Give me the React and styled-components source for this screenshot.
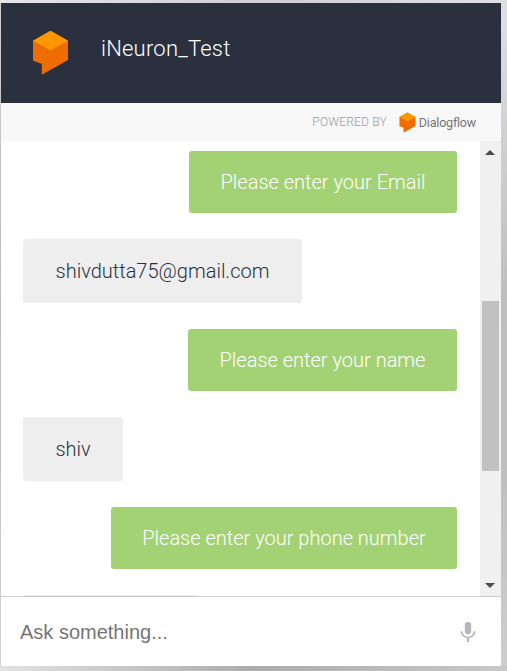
import React from "react";
import styled, { createGlobalStyle } from "styled-components";

const GlobalStyle = createGlobalStyle`
  * { box-sizing: border-box; }
  body { margin: 0; overflow: hidden; font-family: Roboto, "Liberation Sans", sans-serif; }
`;

const Backdrop = styled.div`
  width: 507px;
  height: 671px;
  padding: 3px 6px 5px 1px;
  background:
    linear-gradient(90deg, #e2e2e2, #acacac 50%, #c8c8c8) 0 100% / 100% 5px no-repeat,
    linear-gradient(90deg, #e6e6e8, #cfced3 50%, #dfdfe3) 0 0 / 100% 3px no-repeat,
    linear-gradient(180deg, #d0d0d0, #bdbdbd 40%, #d0d0d0) 0 0 / 1px 100% no-repeat,
    linear-gradient(180deg, #e0e0e3, #bebebe 45%, #bfbfbf 70%, #cecece);
`;

const ChatWindow = styled.main`
  display: flex;
  flex-direction: column;
  width: 500px;
  height: 663px;
  background: #fff;
`;

const Header = styled.header`
  display: flex;
  flex: none;
  align-items: flex-start;
  height: 100px;
  padding: 27px 0 0 31px;
  gap: 32px;
  background: #2b303f;
`;

const Title = styled.h1`
  margin: 4px 0 0;
  font-size: 22px;
  line-height: 30px;
  font-weight: 300;
  letter-spacing: 0.22px;
  color: #fff;
`;

const PoweredBar = styled.div`
  display: flex;
  flex: none;
  align-items: center;
  justify-content: flex-end;
  height: 38px;
  padding-right: 25px;
  background: #f8f8f8;
`;

const PoweredLabel = styled.span`
  margin-right: 12px;
  font-size: 12px;
  font-weight: 300;
  letter-spacing: 0.2px;
  color: #98989d;
`;

const Brand = styled.span`
  margin-left: 3px;
  font-size: 12.5px;
  letter-spacing: -0.2px;
  color: #757575;
`;

const Conversation = styled.section`
  display: flex;
  flex: none;
  height: 455px;
  overflow: hidden;
`;

const Messages = styled.div`
  display: flex;
  flex: 1;
  flex-direction: column;
  gap: 26px;
  padding: 10px 23px 0 22px;
`;

const Bubble = styled.div`
  display: flex;
  flex: none;
  align-items: center;
  justify-content: center;
  align-self: ${(p) => (p.$bot ? "flex-end" : "flex-start")};
  width: ${(p) => p.$width}px;
  height: ${(p) => (p.$bot ? 62 : 64)}px;
  border-radius: 3px;
  background: ${(p) => (p.$bot ? "#a3d274" : "#eeeeee")};
  color: ${(p) => (p.$bot ? "#fff" : "#2b313f")};
  font-size: 20px;
  font-weight: 300;
  white-space: nowrap;
`;

const Scrollbar = styled.div`
  display: flex;
  flex-direction: column;
  align-items: center;
  width: 21px;
  padding: 9px 1px 8px 0;
  background: #f0f0f0;
`;

const Arrow = styled.svg`
  display: block;
  flex: none;
  width: 10px;
  height: 5px;
  fill: #4b4b4f;
`;

const Thumb = styled.div`
  width: 17px;
  height: 170px;
  margin: 146px 0 auto 1px;
  background: #c1c1c1;
`;

const Composer = styled.footer`
  display: flex;
  flex: 1;
  align-items: center;
  padding: 1px 21px 0 19px;
  border-top: 1px solid #cbcbcf;
`;

const AskInput = styled.input`
  flex: 1;
  min-width: 0;
  padding: 1px 0 0;
  border: 0;
  outline: 0;
  background: transparent;
  font: 20px "Liberation Sans", sans-serif;
  &::placeholder { color: #757575; opacity: 1; }
`;

const MicButton = styled.button`
  display: flex;
  padding: 0;
  border: 0;
  background: none;
`;

const Logo = ({ width, height }) => (
  <svg width={width} height={height} viewBox="0 0 37 45" aria-hidden="true">
    <path d="M18.5.7 36 10.7V30L9.8 44.7V34L1 30.5V10.7Z" fill="#ef6c00" />
    <path d="M18.5.7 36 10.7 18.5 20.2 1 10.7Z" fill="#ff9800" />
  </svg>
);

const MicIcon = () => (
  <svg width="24" height="24" viewBox="0 0 24 24" fill="#b6b7bd" aria-hidden="true">
    <path d="M12 14.5c1.8 0 3.2-1.5 3.2-3.3V5.3a3.2 3.2 0 0 0-6.4 0v5.9c0 1.8 1.4 3.3 3.2 3.3Z" />
    <path d="M17.6 11.3c0 3.1-2.6 5.3-5.6 5.3s-5.6-2.2-5.6-5.3H4.6c0 3.6 2.8 6.4 6.3 6.9V22h2.2v-3.8c3.5-.5 6.3-3.3 6.3-6.9Z" />
  </svg>
);

const messages = [
  { bot: true, text: "Please enter your Email", width: 268 },
  { text: "shivdutta75@gmail.com", width: 279 },
  { bot: true, text: "Please enter your name", width: 269 },
  { text: "shiv", width: 100 },
  { bot: true, text: "Please enter your phone number", width: 346 },
  { text: "", width: 176 },
];

export default function App() {
  return (
    <>
      <GlobalStyle />
      <Backdrop>
        <ChatWindow>
          <Header>
            <Logo width={37} height={45} />
            <Title>iNeuron_Test</Title>
          </Header>
          <PoweredBar>
            <PoweredLabel>POWERED BY</PoweredLabel>
            <Logo width={17} height={21} />
            <Brand>Dialogflow</Brand>
          </PoweredBar>
          <Conversation>
            <Messages>
              {messages.map((m, i) => (
                <Bubble key={i} $bot={m.bot} $width={m.width}>{m.text}</Bubble>
              ))}
            </Messages>
            <Scrollbar>
              <Arrow viewBox="0 0 10 5"><path d="M0 5 5 0l5 5Z" /></Arrow>
              <Thumb />
              <Arrow viewBox="0 0 10 5"><path d="M0 0h10L5 5Z" /></Arrow>
            </Scrollbar>
          </Conversation>
          <Composer>
            <AskInput placeholder="Ask something..." aria-label="Ask something" />
            <MicButton aria-label="Use microphone"><MicIcon /></MicButton>
          </Composer>
        </ChatWindow>
      </Backdrop>
    </>
  );
}
